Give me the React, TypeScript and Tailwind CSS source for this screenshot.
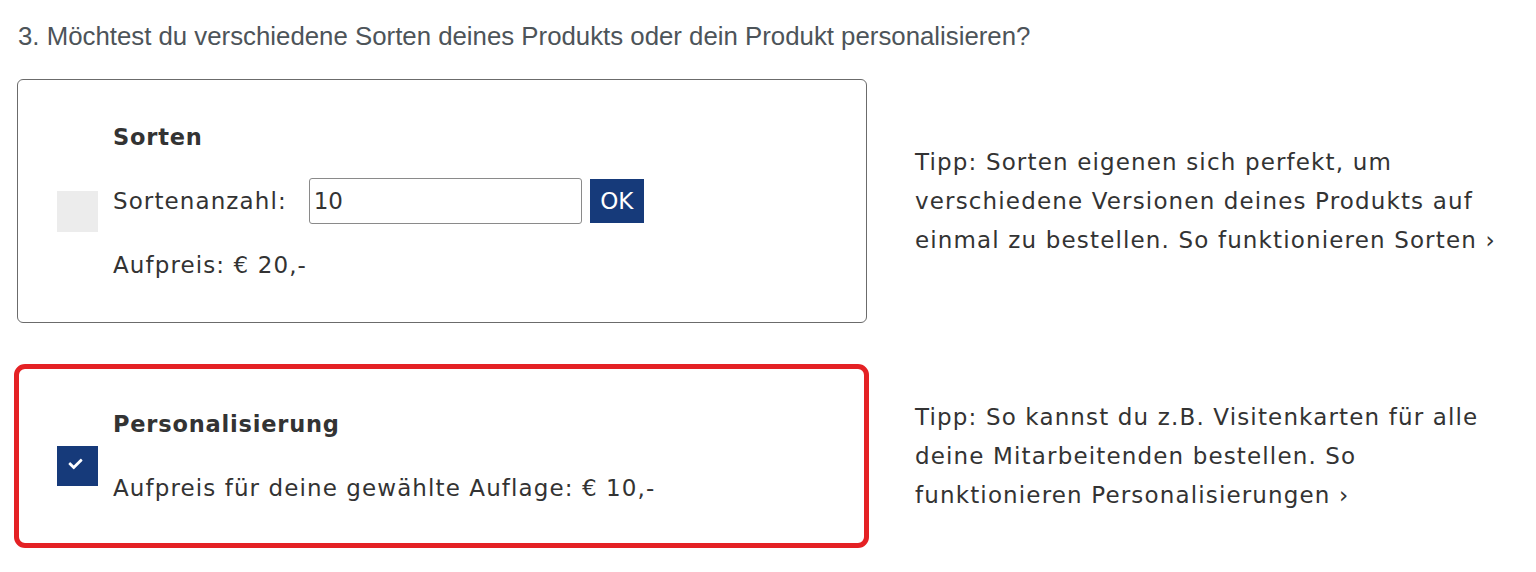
import React from "react";

const body = { fontFamily: '"DejaVu Sans", "Open Sans", sans-serif' };

function Check() {
  return (
    <svg width="17" height="14" viewBox="0 0 512 512" className="-mt-1 -ml-1">
      <path fill="#fff" d="M173.9 439.4l-166.4-166.4c-10-10-10-26.2 0-36.2l36.2-36.2c10-10 26.2-10 36.2 0L192 312.7 432.1 72.6c10-10 26.2-10 36.2 0l36.2 36.2c10 10 10 26.2 0 36.2L210.1 439.4c-10 10-26.2 10-36.2 0z" />
    </svg>
  );
}

export default function App() {
  return (
    <div className="bg-white w-[1536px] h-[572px] overflow-hidden text-[#333]" style={body}>
      <div className="pl-[17px] pt-[21px]">
        <h2
          className="text-[25.8px] leading-[30px] text-[#4d5459] pl-px whitespace-nowrap"
          style={{ fontFamily: '"Liberation Sans", Arial, sans-serif' }}
        >
          3. Möchtest du verschiedene Sorten deines Produkts oder dein Produkt personalisieren?
        </h2>

        <div className="flex items-center mt-[28px]">
          <div className="w-[850px] h-[244px] border border-[#6b6b6b] rounded-[6px] px-[39px] flex items-center">
            <div className="w-[41px] h-[41px] bg-[#ececec] mt-[20px] shrink-0" />
            <div className="ml-[15px] flex flex-col gap-[22px] text-[23px] leading-[39px] tracking-[1.1px]">
              <div className="font-bold tracking-[0.8px] text-[22.5px]">Sorten</div>
              <div className="flex items-center h-[45px]">
                <span>Sortenanzahl:</span>
                <div className="ml-[22px] w-[273px] h-[46px] border border-[#8a8a8a] rounded-[3px] flex items-center px-[4px] tracking-normal">
                  10
                </div>
                <div className="ml-[8px] w-[54px] h-[44px] bg-[#163a7a] text-white flex items-center justify-center tracking-normal">
                  OK
                </div>
              </div>
              <div>Aufpreis: € 20,-</div>
            </div>
          </div>
          <div className="ml-[48px] text-[23px] leading-[39px] tracking-[1.15px] whitespace-nowrap">
            <div>Tipp: Sorten eigenen sich perfekt, um</div>
            <div>verschiedene Versionen deines Produkts auf</div>
            <div>einmal zu bestellen. So funktionieren Sorten ›</div>
          </div>
        </div>

        <div className="flex items-center mt-[41px] -ml-[3px]">
          <div className="w-[855px] h-[184px] border-[5px] border-[#e42124] rounded-[11px] px-[38px] flex items-center">
            <div className="w-[41px] h-[40px] bg-[#163a7a] mt-[20px] shrink-0 flex items-center justify-center">
              <Check />
            </div>
            <div className="ml-[15px] flex flex-col gap-[25px] text-[23px] leading-[39px] tracking-[1.1px]">
              <div className="font-bold tracking-[0.8px] text-[22.5px]">Personalisierung</div>
              <div>Aufpreis für deine gewählte Auflage: € 10,-</div>
            </div>
          </div>
          <div className="ml-[46px] text-[23px] leading-[39px] tracking-[1.15px] whitespace-nowrap">
            <div>Tipp: So kannst du z.B. Visitenkarten für alle</div>
            <div>deine Mitarbeitenden bestellen. So</div>
            <div>funktionieren Personalisierungen ›</div>
          </div>
        </div>
      </div>
    </div>
  );
}
